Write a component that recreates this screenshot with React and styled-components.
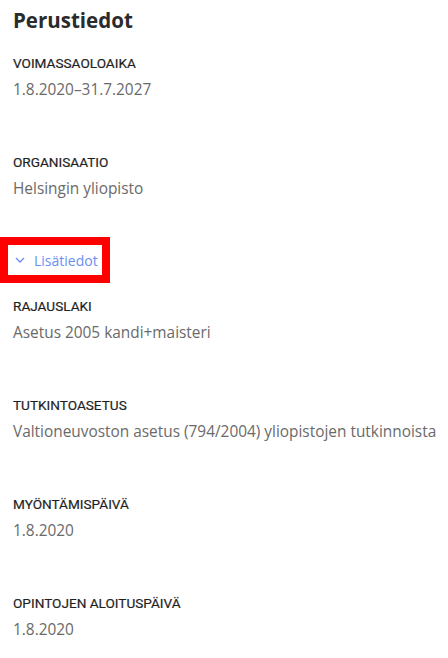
import React from 'react';
import styled, { createGlobalStyle } from 'styled-components';

const GlobalStyle = createGlobalStyle`
  body {
    margin: 0;
    background: #fff;
    font-family: "Open Sans", "Noto Sans", sans-serif;
  }
`;

const Page = styled.div`
  display: flex;
  flex-direction: column;
  padding: 5px 0 0 13px;
`;

const Title = styled.h2`
  margin: 0 0 18px;
  font-size: 20.5px;
  line-height: 30px;
  font-weight: 700;
  color: #2b2b2b;
`;

const Field = styled.div`
  display: flex;
  flex-direction: column;
  gap: 5px;
  margin-bottom: ${p => p.$last ? 0 : 50}px;
`;

const Label = styled.div`
  font-family: Roboto, "Open Sans", sans-serif;
  font-size: 13.6px;
  line-height: 20px;
  font-weight: 400;
  text-transform: uppercase;
  color: #1f1f1f;
  -webkit-text-stroke: 0.2px #1f1f1f;
`;

const Value = styled.div`
  font-size: 15.4px;
  line-height: 24px;
  color: #6a6a6a;
  white-space: nowrap;
`;

const MoreButton = styled.button`
  align-self: flex-start;
  display: flex;
  align-items: center;
  gap: 9px;
  height: 30px;
  width: 94px;
  margin: -6px 0 21px -5px;
  padding: 0 0 0 7px;
  border: none;
  background: #fff;
  outline: 8px solid #ff0000;
  font-family: inherit;
  font-size: 14px;
  color: #6b8ff0;
  cursor: pointer;
`;

const fields = [
  ['Voimassaoloaika', '1.8.2020–31.7.2027'],
  ['Organisaatio', 'Helsingin yliopisto'],
];

const more = [
  ['Rajauslaki', 'Asetus 2005 kandi+maisteri'],
  ['Tutkintoasetus', 'Valtioneuvoston asetus (794/2004) yliopistojen tutkinnoista'],
  ['Myöntämispäivä', '1.8.2020'],
  ['Opintojen aloituspäivä', '1.8.2020'],
];

export default function App() {
  return (
    <Page>
      <GlobalStyle />
      <Title>Perustiedot</Title>
      {fields.map(([l, v]) => (
        <Field key={l}>
          <Label>{l}</Label>
          <Value>{v}</Value>
        </Field>
      ))}
      <MoreButton>
        <svg width="10" height="6" viewBox="0 0 10 6" fill="none" stroke="#6b8ff0" strokeWidth="1.3">
          <path d="M1 1l4 4 4-4" />
        </svg>
        Lisätiedot
      </MoreButton>
      {more.map(([l, v], i) => (
        <Field key={l} $last={i === more.length - 1}>
          <Label>{l}</Label>
          <Value>{v}</Value>
        </Field>
      ))}
    </Page>
  );
}
